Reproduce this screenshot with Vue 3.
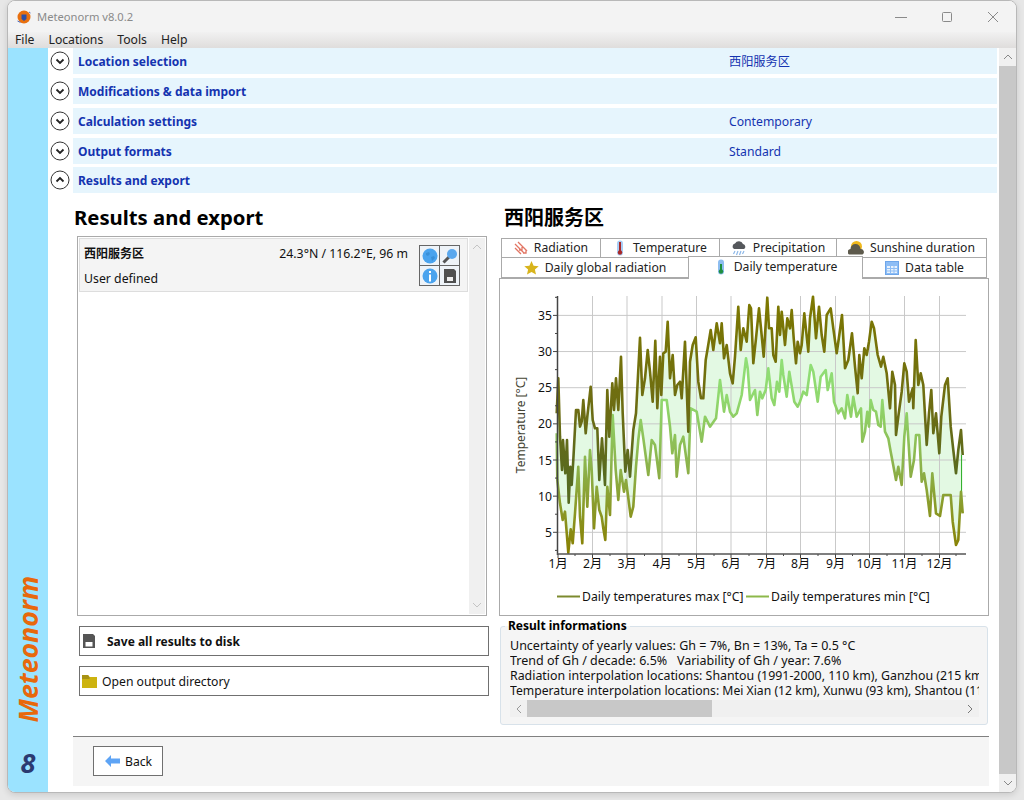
<script setup>
const conv = (arr, ox, oy) => {
  const out = []
  for (let i = 0; i < arr.length; i += 2) out.push([ox + arr[i] / 3, oy + arr[i + 1] / 3])
  return out
}
const maxPts = [
  ...conv([20,130,25,25,30,200,36,300,39,210,46,310,51,210,56,398,61,290,65,345,70,270,78,120,85,120,90,170,95,155,100,90,107,190,112,140,122,50,128,150,135,175,142,175,148,330,156,205,165,345,172,60,178,200,187,40,192,120,198,25,205,120], 550, 370),
  ...conv([363,215], 500, 285),
  ...conv([218,130,226,305,233,240,240,320,250,180,258,130], 550, 370),
  ...conv([420,158,427,330,435,280,443,195,450,260,458,350,466,167,472,370,480,215,484,330,490,205,497,200,503,110,510,280,518,210,525,330,532,300,540,290,545,340,555,170,565,440,570,230,578,180,587,157,595,290,603,340,610,340,617,225,623,190,632,135,640,195,650,115,660,175,665,115,672,220,680,180,690,265,698,295,705,215,715,65,722,195,730,130,740,170], 500, 285),
  ...conv([13,60,18,70,25,235,33,160,42,70,48,130,56,215,67,38,72,130,80,130,85,210,92,230,100,65,105,150,110,80,120,180,127,100,135,130,140,75,146,160,153,235,158,170,165,205,170,180,178,85,190,200,195,100,204,35,213,160,222,65,230,150,238,200,245,90,257,70,265,130,275,205,283,150,291,90,300,250,310,225,321,145,330,245,338,325,343,210,350,280,358,190,365,210,372,170,380,110,387,130,398,210,408,245,415,215,425,265,435,370,442,260,450,300,453,450,460,395,470,320,478,235,485,260,492,350,503,310,505,370,512,165,520,300,527,265,535,300,545,480], 745, 285),
  ...conv([207,130,214,60,220,190,228,130,238,250,244,140,255,45,263,25,272,170,280,240,288,310,295,240,303,180,308,255], 860, 370),
]
const minPts = [
  ...conv([20,190,22,330,30,400,38,450,45,425,55,548,62,478,68,520,75,430,85,290,90,440,97,520,105,260,112,410,120,240,125,300,132,475,140,350,148,420,155,440,160,475,166,510,172,350,180,435,188,135,197,300,205,390,212,300,222,365,228,330,242,440,250,410,258,290,265,210,272,150,280,205,295,315,305,210,315,225,328,325,335,90,350,90,360,170,367,250,375,195,380,320,390,225,400,200,415,310,422,115,440,125,455,215,465,140,480,170], 550, 370),
  ...conv([648,400,660,285,672,380,680,330,690,380,700,395,710,385,725,330,738,220], 500, 285),
  ...conv([8,250,15,345,30,315,37,390,45,320,52,340,62,315,70,250,80,340,88,360,96,290,103,320,110,225,115,270,125,335,133,260,148,350,158,365,165,350,175,320,185,330,197,240,205,260,218,350,227,275,242,255,248,315,260,265,267,350,280,385,290,370,300,400,307,330,318,395,325,335,335,395,348,370,352,470,360,440,367,380,372,425,377,345,385,375,393,380,400,420,407,425,412,345,420,440,430,460,437,500], 745, 285),
  ...conv([108,330,115,290,125,345,133,200,140,130,152,320,162,270,168,195,178,195,185,335,192,310,200,360,210,438,217,310,228,430,240,438,250,375,272,375,278,455,288,525,295,510,303,365,308,430], 860, 370),
]
const str = p => p.map(a => a[0].toFixed(1) + ',' + a[1].toFixed(1)).join(' ')
const maxLine = str(maxPts)
const minLine = str(minPts)
const band = str([...maxPts, ...[...minPts].reverse()])

const months = [[558,'1月'],[592.5,'2月'],[627,'3月'],[662,'4月'],[696.5,'5月'],[731,'6月'],[766.5,'7月'],[800.5,'8月'],[835.5,'9月'],[869.5,'10月'],[904.5,'11月'],[939.5,'12月']]
const midTicks = [575,610,644.5,679,714,749,783.5,818,852.5,887,922,956]
const yVals = [35,30,25,20,15,10,5].map(v => ({ v, y: 568.45 - 7.23 * v }))
const yMinor = [37.5,32.5,27.5,22.5,17.5,12.5,7.5,2.5].map(v => 568.45 - 7.23 * v)

const rows = [
  { label: 'Location selection', value: '西阳服务区', open: false },
  { label: 'Modifications & data import', value: '', open: false },
  { label: 'Calculation settings', value: 'Contemporary', open: false },
  { label: 'Output formats', value: 'Standard', open: false },
  { label: 'Results and export', value: '', open: true },
]
const infoLines = [
  'Uncertainty of yearly values: Gh = 7%, Bn = 13%, Ta = 0.5 °C',
  'Trend of Gh / decade: 6.5%   Variability of Gh / year: 7.6%',
  'Radiation interpolation locations: Shantou (1991-2000, 110 km), Ganzhou (215 km), Fuzhou (290 km)',
  'Temperature interpolation locations: Mei Xian (12 km), Xunwu (93 km), Shantou (110 km)',
]
</script>

<template>
  <div class="screen">
    <div class="win">
      <header class="title">
        <svg class="logo" width="16" height="16" viewBox="0 0 16 16">
          <circle cx="8" cy="8" r="6.500" fill="#e8700f" />
          <path d="M5.500 5.500h5v4.500l-2.500 2-2.500-2z" fill="#2c50a8" />
          <path d="M1.500 12l3 1.500M13 3l1.500 1" stroke="#5070c0" stroke-width="1" />
        </svg>
        <span class="title-text">Meteonorm v8.0.2</span>
        <div class="winbtns">
          <svg width="12" height="12" viewBox="0 0 12 12"><path d="M0 6.500h12" stroke="#8a8a8a" /></svg>
          <svg width="12" height="12" viewBox="0 0 12 12"><rect x="1.500" y="1.500" width="9" height="9" rx="1" fill="none" stroke="#8a8a8a" /></svg>
          <svg width="12" height="12" viewBox="0 0 12 12"><path d="M1 1l10 10M11 1L1 11" stroke="#8a8a8a" /></svg>
        </div>
      </header>
      <nav class="menu">
        <span>File</span><span>Locations</span><span>Tools</span><span>Help</span>
      </nav>
      <div class="body">
        <aside class="side">
          <div class="brand">Meteonorm</div>
          <div class="eight">8</div>
        </aside>
        <main class="main">
          <div v-for="r in rows" :key="r.label" class="acc">
            <div class="toggle">
              <svg width="20" height="20" viewBox="0 0 20 20">
                <circle cx="10" cy="10" r="9" fill="#fff" stroke="#333" />
                <path :d="r.open ? 'M6.500 11.500L10 8l3.500 3.500' : 'M6.500 8.500L10 12l3.500-3.500'" fill="none" stroke="#222" stroke-width="1.800" />
              </svg>
            </div>
            <div class="acc-bar">
              <span class="acc-label">{{ r.label }}</span>
              <span class="acc-value">{{ r.value }}</span>
            </div>
          </div>

          <div class="cols">
            <section class="left">
              <h2 class="h-left">Results and export</h2>
              <div class="list">
                <div class="list-inner">
                  <div class="item">
                    <div class="item-text">
                      <div class="item-top"><b>西阳服务区</b><span>24.3°N / 116.2°E, 96 m</span></div>
                      <div>User defined</div>
                    </div>
                    <div class="icons">
                      <div class="cell">
                        <svg width="18" height="18" viewBox="0 0 18 18"><circle cx="9" cy="9" r="7.500" fill="#4aa3ee" /><path d="M5 6l3-1 1 2-2 2-2-1zM10 10l3-1 1 2-3 3z" fill="#3a90d8" /></svg>
                      </div>
                      <div class="cell">
                        <svg width="18" height="18" viewBox="0 0 18 18"><path d="M2.500 15.500L8 10" stroke="#555" stroke-width="3" /><circle cx="11" cy="7" r="5" fill="#5aa8ee" /></svg>
                      </div>
                      <div class="cell">
                        <svg width="18" height="18" viewBox="0 0 18 18"><circle cx="9" cy="9" r="7.500" fill="#4aa3ee" /><rect x="8" y="7.500" width="2" height="7" fill="#fff" /><rect x="8" y="4" width="2" height="2" fill="#fff" /></svg>
                      </div>
                      <div class="cell">
                        <svg width="18" height="18" viewBox="0 0 18 18"><path d="M3 2h10l2 2v12H3z" fill="#505050" /><rect x="6" y="10" width="6" height="4" fill="#eee" /></svg>
                      </div>
                    </div>
                  </div>
                </div>
                <div class="vbar">
                  <svg width="10" height="6" viewBox="0 0 10 6"><path d="M1 5l4-4 4 4" fill="none" stroke="#c4c4c4" /></svg>
                  <svg width="10" height="6" viewBox="0 0 10 6"><path d="M1 1l4 4 4-4" fill="none" stroke="#c4c4c4" /></svg>
                </div>
              </div>
              <button class="btn first">
                <svg width="14" height="16" viewBox="0 0 14 16"><path d="M1 1h10l2 2v12H1z" fill="#555" /><rect x="3.500" y="9" width="7" height="4.500" fill="#fff" /></svg>
                <b class="btn-bold">Save all results to disk</b>
              </button>
              <button class="btn">
                <svg width="15" height="14" viewBox="0 0 15 14"><path d="M0 1h6l1.500 2H15v11H0z" fill="#cdb30f" /><path d="M0 1h6l1.500 2v2H0z" fill="#a89214" /></svg>
                <span class="btn-reg">Open output directory</span>
              </button>
            </section>

            <section class="right">
              <h2 class="h-right">西阳服务区</h2>
              <div class="tabs">
                <div class="tabrow">
                  <div class="tab t1">
                    <svg width="14" height="14" viewBox="0 0 14 14"><path d="M1 3l9 9M4 1l9 9M1 7l6 6M9 12h3V9M5 9h3V6" fill="none" stroke="#e27563" stroke-width="1.300" /></svg>
                    Radiation
                  </div>
                  <div class="tab t2">
                    <svg width="14" height="16" viewBox="0 0 14 16"><rect x="4" y="0.500" width="6" height="15" rx="3" fill="#a9cdf5" /><rect x="6" y="2" width="2" height="9" fill="#a82828" /><circle cx="7" cy="12.500" r="2.200" fill="#a82828" /></svg>
                    Temperature
                  </div>
                  <div class="tab t3">
                    <svg width="16" height="16" viewBox="0 0 16 16"><path d="M3 9a3 3 0 0 1 1-5.500A4.500 4.500 0 0 1 12 4a2.700 2.700 0 0 1 1 5z" fill="#55585c" /><path d="M4 11l-1.500 3M7 11l-1.500 4M10 11l-1.500 4M13 11l-1.500 3" stroke="#8db8e8" stroke-width="1.200" /></svg>
                    Precipitation
                  </div>
                  <div class="tab t4">
                    <svg width="16" height="16" viewBox="0 0 16 16"><circle cx="8.500" cy="6.500" r="5.500" fill="#f0b81c" /><path d="M1 14.500a3 3 0 0 1 1.500-5.500 5 5 0 0 1 10 0 3 3 0 0 1 2 5.500z" fill="#5d5a4c" /></svg>
                    Sunshine duration
                  </div>
                </div>
                <div class="tabrow">
                  <div class="tab b1">
                    <svg width="15" height="14" viewBox="0 0 15 14"><path d="M7.500 0l2.100 4.700 5.100.5-3.800 3.400 1.100 5-4.500-2.600L3 13.600l1.100-5L.3 5.200l5.100-.5z" fill="#d8b41c" /></svg>
                    Daily global radiation
                  </div>
                  <div class="tab b2">
                    <svg width="14" height="16" viewBox="0 0 14 16"><rect x="4" y="0.500" width="6" height="15" rx="3" fill="#8dbdf0" /><rect x="6" y="5" width="2" height="6" fill="#1f8f3f" /><circle cx="7" cy="12.500" r="2.200" fill="#1f8f3f" /></svg>
                    Daily temperature
                  </div>
                  <div class="tab b3">
                    <svg width="14" height="14" viewBox="0 0 14 14"><rect x="0.500" y="0.500" width="13" height="13" fill="#8dbdf5" stroke="#6ea6ea" /><path d="M2 5h10v7H2z" fill="#e8f2fd" /><path d="M2 7.500h10M2 10h10M5.500 5v7M9 5v7" stroke="#8dbdf5" /></svg>
                    Data table
                  </div>
                </div>
              </div>
              <div class="panel">
                <svg class="chart" width="488" height="336" viewBox="500 279 488 336">
                  <defs>
                    <linearGradient id="gmax" gradientUnits="userSpaceOnUse" x1="0" y1="296" x2="0" y2="554">
                      <stop offset="0" stop-color="#7d7800" />
                      <stop offset="0.45" stop-color="#6c6c14" />
                      <stop offset="0.72" stop-color="#566a20" />
                      <stop offset="1" stop-color="#566a20" />
                    </linearGradient>
                    <linearGradient id="gmin" gradientUnits="userSpaceOnUse" x1="0" y1="296" x2="0" y2="554">
                      <stop offset="0" stop-color="#90ea86" />
                      <stop offset="0.4" stop-color="#90d86e" />
                      <stop offset="0.68" stop-color="#8cb048" />
                      <stop offset="1" stop-color="#887e00" />
                    </linearGradient>
                  </defs>
                  <polygon :points="band" fill="#dcf8dc" fill-opacity="0.8" />
                  <g stroke="#c9c9c9" stroke-width="1">
                    <line v-for="m in months.slice(1)" :key="m[1]" :x1="m[0]" y1="296" :x2="m[0]" y2="554" />
                    <line v-for="t in yVals" :key="t.v" x1="558" :y1="t.y" x2="966" :y2="t.y" />
                  </g>
                  <line x1="961.500" y1="455" x2="961.500" y2="492" stroke="#35b030" stroke-width="1" />
                  <polyline :points="minLine" fill="none" stroke="url(#gmin)" stroke-width="2.600" stroke-linejoin="round" />
                  <polyline :points="maxLine" fill="none" stroke="url(#gmax)" stroke-width="2.600" stroke-linejoin="round" />
                  <g stroke="#444" stroke-width="1">
                    <line v-for="t in yVals" :key="t.v" x1="553" :y1="t.y" x2="557" :y2="t.y" />
                    <line v-for="(y, i) in yMinor" :key="i" x1="555" :y1="y" x2="557" :y2="y" />
                    <line v-for="m in months" :key="m[1]" :x1="m[0]" y1="554" :x2="m[0]" y2="558" />
                    <line v-for="(x, i) in midTicks" :key="i" :x1="x" y1="554" :x2="x" y2="556" />
                  </g>
                  <line x1="557.500" y1="296" x2="557.500" y2="555" stroke="#444" stroke-width="1.500" />
                  <line x1="557" y1="554" x2="966" y2="554" stroke="#555" stroke-width="1.500" />
                  <g class="tick">
                    <text v-for="t in yVals" :key="t.v" x="552" :y="t.y + 4.500" text-anchor="end">{{ t.v }}</text>
                    <text v-for="m in months" :key="m[1]" :x="m[0]" y="568" text-anchor="middle">{{ m[1] }}</text>
                    <text x="0" y="0" text-anchor="middle" transform="translate(525 425) rotate(-90)" class="ytitle">Temperature [°C]</text>
                    <text x="582" y="601">Daily temperatures max [°C]</text>
                    <text x="771" y="601">Daily temperatures min [°C]</text>
                  </g>
                  <line x1="557" y1="596.500" x2="580" y2="596.500" stroke="#7c8a2e" stroke-width="2" />
                  <line x1="746" y1="596.500" x2="769" y2="596.500" stroke="#8db84a" stroke-width="2" />
                </svg>
              </div>
              <div class="group">
                <div class="legend">Result informations</div>
                <div class="info">
                  <div v-for="(l, i) in infoLines" :key="i" class="info-line">{{ l }}</div>
                </div>
                <div class="hbar">
                  <svg width="6" height="10" viewBox="0 0 6 10"><path d="M5 1L1 5l4 4" fill="none" stroke="#999" /></svg>
                  <div class="hthumb"></div>
                  <svg width="6" height="10" viewBox="0 0 6 10"><path d="M1 1l4 4-4 4" fill="none" stroke="#777" /></svg>
                </div>
              </div>
            </section>
          </div>

          <footer class="foot">
            <button class="back">
              <svg width="15" height="12" viewBox="0 0 15 12"><path d="M0 6l6-6v3.500h9v5H6V12z" fill="#5ea4f5" /></svg>
              <span>Back</span>
            </button>
          </footer>
        </main>
        <div class="scroll">
          <div class="arrow"><svg width="10" height="6" viewBox="0 0 10 6"><path d="M1 5l4-4 4 4" fill="none" stroke="#888" /></svg></div>
          <div class="thumb"></div>
          <div class="arrow"><svg width="10" height="6" viewBox="0 0 10 6"><path d="M1 1l4 4 4-4" fill="none" stroke="#888" /></svg></div>
        </div>
      </div>
    </div>
  </div>
</template>

<style>
html, body { margin: 0; background: #e7e7e7; }
</style>

<style scoped>
* { box-sizing: border-box; }
.screen {
  width: 1024px;
  height: 800px;
  padding: 0 7px 7px;
  background: #e7e7e7;
  font-family: "Noto Sans", "Noto Sans CJK SC", sans-serif;
  font-size: 12px;
  color: #111;
  overflow: hidden;
}
.win {
  width: 1010px;
  height: 793px;
  border: 1px solid #b8b8b8;
  border-radius: 8px;
  overflow: hidden;
  background: #fff;
  display: flex;
  flex-direction: column;
  box-shadow: 0 2px 6px rgba(0, 0, 0, .12);
}
.title {
  height: 31px;
  flex: none;
  background: #f3f3f3;
  display: flex;
  align-items: center;
  padding-left: 8px;
}
.logo { margin-right: 5px; }
.title-text { color: #8a8a8a; font-size: 11.200px; }
.winbtns {
  margin-left: auto;
  display: flex;
  gap: 34px;
  padding-right: 17px;
  align-items: center;
}
.menu {
  height: 16px;
  flex: none;
  background: linear-gradient(#f1f1f1, #dfdddc);
  display: flex;
  align-items: center;
  padding: 0 0 0 7px;
  gap: 14px;
  font-size: 12.200px;
  line-height: 14px;
  color: #222;
}
.body { flex: 1; display: flex; min-height: 0; }
.side {
  width: 40px;
  flex: none;
  background: #9be3ff;
  display: flex;
  flex-direction: column;
  align-items: center;
  justify-content: flex-end;
}
.brand {
  writing-mode: vertical-rl;
  transform: rotate(180deg);
  font: italic 700 26.600px/30px "Open Sans", sans-serif;
  color: #e8680c;
  margin-bottom: 26px;
}
.eight {
  font: italic 700 27px/30px "Open Sans", sans-serif;
  color: #2b3a70;
  margin-bottom: 14px;
}
.main { width: 950px; flex: none; display: flex; flex-direction: column; }
.acc { display: flex; height: 26px; margin-bottom: 4px; }
.acc:nth-child(4) { margin-bottom: 3px; }
.acc:nth-child(5) { margin-bottom: 0; }
.toggle { width: 25px; flex: none; display: flex; padding: 3px 0 0 2px; }
.acc-bar {
  flex: 1;
  margin-right: 1px;
  background: #e6f5fd;
  display: flex;
  align-items: center;
  padding-left: 5px;
  color: #1433b0;
}
.acc-label { width: 651px; font-weight: 700; font-size: 12px; }
.acc-value { font-size: 12.200px; line-height: 16px; padding-top: 2px; }
.cols { display: flex; height: 533px; padding-left: 25px; }
.left { width: 426px; flex: none; padding-left: 4px; display: flex; flex-direction: column; }
h2 { margin: 0; font-size: 20px; line-height: 26px; font-weight: 700; color: #000; }
.h-left { margin: 11px 0 6px -3px; font-size: 20.300px; }
.h-right { margin: 12px 0 7px 5px; }
.list {
  width: 410px;
  height: 380px;
  flex: none;
  border: 1px solid #aaa;
  display: flex;
  padding: 1px;
}
.list-inner { width: 389px; flex: none; }
.item {
  height: 54px;
  background: #f4f4f4;
  border: 1px solid #ddd;
  display: flex;
  padding: 6px 7px 0 4px;
  font-size: 12.300px;
}
.item-text { flex: 1; display: flex; flex-direction: column; gap: 7px; line-height: 18px; }
.item-top { display: flex; justify-content: space-between; padding-right: 11px; }
.item-top b { font-size: 12px; }
.icons {
  width: 41px;
  height: 41px;
  flex: none;
  display: grid;
  grid-template-columns: 19px 19px;
  grid-template-rows: 19px 19px;
  border: 1px solid #666;
  background: #666;
  gap: 1px;
}
.cell { background: #eef3f8; display: flex; align-items: center; justify-content: center; overflow: hidden; }
.vbar {
  flex: 1;
  margin-left: 1px;
  background: #f0f0f0;
  display: flex;
  flex-direction: column;
  justify-content: space-between;
  align-items: center;
  padding: 6px 0;
}
.btn, .back {
  font-family: inherit;
  font-size: 12.200px;
  color: #111;
  background: #fff;
  border: 1px solid #707070;
  display: flex;
  align-items: center;
  cursor: default;
}
.btn { width: 410px; height: 30px; margin: 10px 0 0 2px; padding: 0 0 0 2px; flex: none; }
.btn-bold { margin-left: 11px; font-size: 12px; }
.btn-reg { margin-left: 5px; }
.right { width: 490px; flex: none; display: flex; flex-direction: column; }
.tabs { margin-left: 2px; width: 486px; height: 40px; flex: none; position: relative; }
.tabrow { display: flex; height: 20px; font-size: 12.200px; }
.tab {
  display: flex;
  align-items: center;
  justify-content: center;
  gap: 6px;
  border: 1px solid #aaa;
  margin-left: -1px;
  background: #fff;
  color: #222;
  line-height: 16px;
}
.tab:first-child { margin-left: 0; }
.t1 { width: 100px; }
.t2 { width: 120px; }
.t3 { width: 118px; }
.t4 { flex: 1; }
.b1 { width: 188px; border-top: 0; }
.b2 {
  width: 175px;
  height: 23px;
  margin-top: -2px;
  border-bottom: 0;
  position: relative;
  z-index: 1;
  padding-bottom: 2px;
  margin-bottom: -2px;
}
.b3 { flex: 1; border-top: 0; }
.panel {
  width: 490px;
  height: 338px;
  flex: none;
  border: 1px solid #aaa;
  background: #fff;
}
.chart { display: block; }
.tick { font-size: 12.200px; fill: #111; font-family: "Noto Sans", "Noto Sans CJK SC", sans-serif; }
.ytitle { fill: #443; font-size: 12px; }
.group {
  margin: 10px 0 0 1px;
  width: 488px;
  height: 99px;
  flex: none;
  background: #f5f5f5;
  border: 1px solid #d8e2ea;
  border-radius: 3px;
  position: relative;
  padding: 11px 8px 0 9px;
}
.legend {
  position: absolute;
  left: 4px;
  top: -9px;
  padding: 0 3px;
  font-size: 12px;
  font-weight: 700;
  line-height: 16px;
  color: #000;
  background: linear-gradient(#fff 50%, #f5f5f5 50%);
}
.info { height: 60px; overflow: hidden; font-size: 12.500px; line-height: 15px; }
.info-line { white-space: pre; }
.info-line:nth-child(3) { font-size: 12.370px; }
.info-line:nth-child(4) { font-size: 12.200px; }
.hbar {
  height: 17px;
  background: #f0f0f0;
  display: flex;
  align-items: center;
  justify-content: space-between;
  padding: 0 6px;
  position: relative;
  margin-top: 2px;
}
.hthumb {
  position: absolute;
  left: 17px;
  top: 0;
  width: 185px;
  height: 17px;
  background: #c8c8c8;
}
.foot {
  width: 916px;
  margin-left: 25px;
  height: 50px;
  flex: none;
  margin-top: 10px;
  border-top: 1px solid #808080;
  background: #f5f5f5;
  padding: 9px 0 0 20px;
}
.back { width: 70px; height: 30px; padding-left: 11px; gap: 5px; }
.scroll {
  flex: 1;
  margin-left: 1px;
  background: #f0f0f0;
  display: flex;
  flex-direction: column;
}
.arrow { height: 18px; flex: none; display: flex; align-items: center; justify-content: center; }
.thumb { flex: 1; background: #c8c8c8; }
</style>
